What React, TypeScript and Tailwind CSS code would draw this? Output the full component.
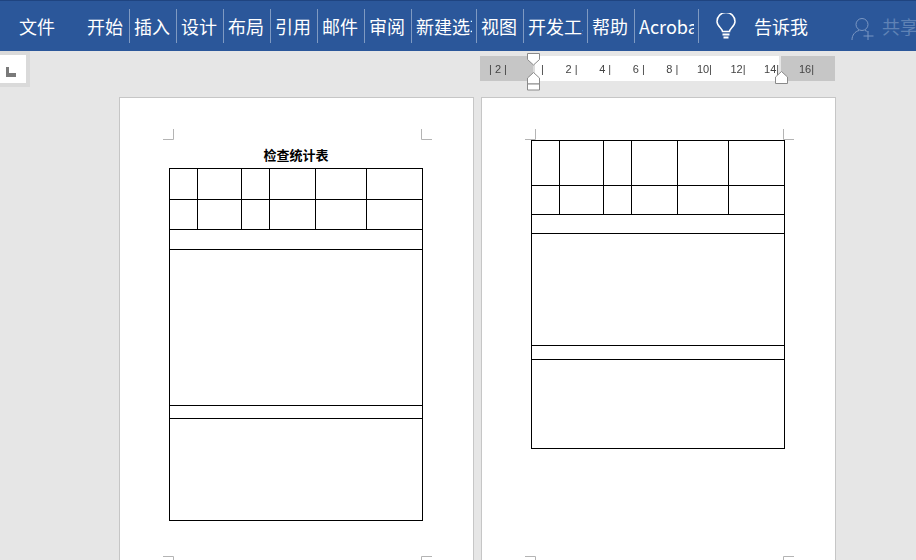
const fontStack = { fontFamily: '"Noto Sans CJK SC", sans-serif' };

const tabs = [
  { label: "开始", w: "w-[48px] pl-[5px] pr-[3px]" },
  { label: "插入", w: "w-[47px] px-[4px]" },
  { label: "设计", w: "w-[47px] px-[4px]" },
  { label: "布局", w: "w-[47px] px-[4px]" },
  { label: "引用", w: "w-[47px] px-[4px]" },
  { label: "邮件", w: "w-[47px] px-[4px]" },
  { label: "审阅", w: "w-[47px] px-[4px]" },
  { label: "新建选项卡", w: "w-[65px] px-[4px]" },
  { label: "视图", w: "w-[47px] px-[4px]" },
  { label: "开发工具", w: "w-[64px] px-[4px]" },
  { label: "帮助", w: "w-[47px] px-[4px]" },
  { label: "Acrobat", w: "w-[64px] px-[4px]" },
];

const rulerLabels = ["2 |", "4 |", "6 |", "8 |", "10|", "12|", "14|"];

function CropMark({ className, d }: { className: string; d: string }) {
  return (
    <svg className={`absolute ${className}`} width="11" height="11" viewBox="0 0 11 11" fill="none">
      <path d={d} stroke="#b4b4b4" strokeWidth="1" />
    </svg>
  );
}

function FormTable({ heights }: { heights: number[] }) {
  return (
    <table className="border-collapse table-fixed w-[253px]">
      <colgroup>
        <col className="w-[28px]" />
        <col className="w-[44px]" />
        <col className="w-[28px]" />
        <col className="w-[46px]" />
        <col className="w-[51px]" />
        <col className="w-[56px]" />
      </colgroup>
      <tbody>
        {heights.map((h, i) => (
          <tr key={i} style={{ height: h }}>
            {i < 2 ? (
              [0, 1, 2, 3, 4, 5].map((c) => <td key={c} className="border border-black p-0" />)
            ) : (
              <td colSpan={6} className="border border-black p-0" />
            )}
          </tr>
        ))}
      </tbody>
    </table>
  );
}

function Page({ children, className }: { children: React.ReactNode; className: string }) {
  return (
    <div className={`relative w-[355px] h-[500px] shrink-0 bg-white border border-[#c6c6c6] pl-[49px] ${className}`}>
      <CropMark className="left-[43px] top-[31px]" d="M0 10.5H10.5V0" />
      <CropMark className="left-[301px] top-[31px]" d="M0.5 0V10.5H11" />
      <CropMark className="left-[43px] top-[458px]" d="M0 0.5H10.5V11" />
      <CropMark className="left-[301px] top-[458px]" d="M11 0.5H0.5V11" />
      {children}
    </div>
  );
}

export default function App() {
  return (
    <div className="w-[916px] h-[560px] overflow-hidden bg-[#e6e6e6] relative" style={fontStack}>
      {/* ribbon */}
      <div className="h-[51px] bg-[#2b579a] border-t border-[#1f4480] flex items-center text-white text-[18px] leading-[24px]">
        <span className="ml-[19px] w-[63px] shrink-0">文件</span>
        {tabs.map((t) => (
          <div
            key={t.label}
            className={`${t.w} h-[34px] shrink-0 flex items-center border-r border-[#7f9ac2]`}
          >
            <span className="block overflow-hidden whitespace-nowrap">{t.label}</span>
          </div>
        ))}
        <svg className="ml-[17px] shrink-0" width="20" height="26" viewBox="0 0 20 26" fill="none" stroke="white" strokeWidth="1.5">
          <path d="M6.5 18.5c0-3-5.5-5-5.5-10a9 9 0 0 1 18 0c0 5-5.500 7-5.500 10z" />
          <path d="M6.500 21.500h7M7.500 24.500h5" strokeWidth="2" />
        </svg>
        <span className="ml-[18px] shrink-0">告诉我</span>
        <svg className="ml-[43px] mt-[5px] shrink-0" width="24" height="24" viewBox="0 0 24 24" fill="none" stroke="#7b97c3" strokeWidth="1">
          <circle cx="11" cy="7.500" r="6" />
          <path d="M1 23c0-5 3-8.500 7-9.500M14 13.500c1 .3 2 .8 2.500 1.300M17 14v9M12.500 19h10" />
        </svg>
        <span className="ml-[7px] shrink-0 text-[#5f82b5]">共享</span>
      </div>

      {/* ruler row */}
      <div className="h-[46px] flex items-start">
        <div className="w-[30px] h-[36px] shrink-0 bg-[#dadada] pt-[4px]">
          <div className="w-[26px] h-[28px] bg-white pt-[12px] pl-[6px]">
            <div className="w-[3px] h-[6px] bg-[#7a7a7a]" />
            <div className="w-[10px] h-[4px] bg-[#7a7a7a]" />
          </div>
        </div>
        <div className="ml-[450px] mt-[5px] w-[355px] h-[25px] flex items-center text-[11px] leading-[26px] text-[#444444] will-change-transform" style={{ fontFamily: '"Liberation Sans", sans-serif' }}>
          <div className="w-[53px] h-full bg-[#c6c6c6] pl-[9px] whitespace-pre shrink-0">| 2 |</div>
          <div className="w-[2px] h-full bg-[#dcdcdc] shrink-0" />
          <div className="w-[244px] h-full bg-white flex pl-[6px] shrink-0">
            <span className="w-[3px] shrink-0">|</span>
            <div className="flex">
              {rulerLabels.map((n) => (
                <span key={n} className="w-[33.600px] text-right whitespace-pre">{n}</span>
              ))}
            </div>
          </div>
          <div className="w-[2px] h-full bg-[#e6e6e6] shrink-0" />
          <div className="w-[54px] h-full bg-[#c6c6c6] pr-[21px] text-right shrink-0">16|</div>
        </div>
      </div>

      {/* margin handles on the ruler */}
      <svg className="absolute left-[526px] top-[52px]" width="16" height="40" viewBox="0 0 16 40" fill="white" stroke="#8a8a8a">
        <path d="M1.500 1.500h12v6l-6 5.500-6-5.500z" />
        <path d="M7.500 20.500l6 5.500v6h-12v-6z" />
        <path d="M1.500 32h12v6h-12z" />
      </svg>
      <svg className="absolute left-[774px] top-[70px]" width="15" height="15" viewBox="0 0 15 15" fill="white" stroke="#8a8a8a">
        <path d="M7.500 1.500l6 5.500v6.500h-12v-6.500z" />
      </svg>

      {/* pages */}
      <div className="flex gap-[7px] pl-[119px]">
        <Page className="pt-[45px]">
          <p className="w-[253px] pl-[1px] text-center text-[13px] leading-[24px] h-[25px] font-bold text-black">
            检查统计表
          </p>
          <FormTable heights={[31, 30, 20, 156, 13, 102]} />
        </Page>
        <Page className="pt-[42px]">
          <FormTable heights={[45, 29, 19, 112, 14, 89]} />
        </Page>
      </div>
    </div>
  );
}
